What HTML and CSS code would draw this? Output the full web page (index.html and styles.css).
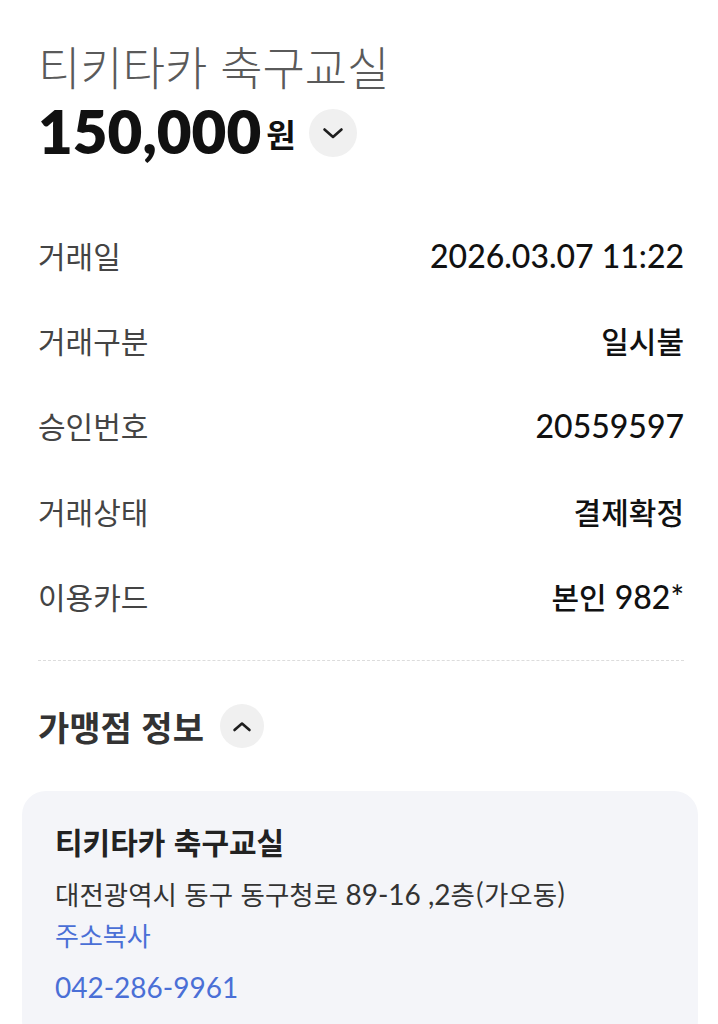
FILE: index.html
```html
<!DOCTYPE html>
<html lang="ko">
<head>
<meta charset="utf-8">
<title>거래 상세</title>
<link rel="stylesheet" href="styles.css">
</head>
<body>
<main class="page">
  <h1 class="merchant-title">티키타카 축구교실</h1>
  <div class="amount-row">
    <span class="amount">150,000</span><span class="won">원</span>
    <button class="circle-btn circle-lg" aria-label="펼치기">
      <svg width="22" height="12" viewBox="0 0 22 12"><path d="M2.5 2.5 L11 10 L19.5 2.5" fill="none" stroke="#1e1e1e" stroke-width="2.6" stroke-linecap="round" stroke-linejoin="round"/></svg>
    </button>
  </div>

  <dl class="details">
    <div class="row"><dt>거래일</dt><dd><span class="num">2026.03.07 11:22</span></dd></div>
    <div class="row"><dt>거래구분</dt><dd>일시불</dd></div>
    <div class="row"><dt>승인번호</dt><dd><span class="num">20559597</span></dd></div>
    <div class="row"><dt>거래상태</dt><dd>결제확정</dd></div>
    <div class="row"><dt>이용카드</dt><dd>본인<span class="num"> 982*</span></dd></div>
  </dl>

  <hr class="divider">

  <div class="section-head">
    <h2>가맹점 정보</h2>
    <button class="circle-btn circle-sm" aria-label="접기">
      <svg width="20" height="11" viewBox="0 0 20 11"><path d="M2.5 9 L10 2.5 L17.5 9" fill="none" stroke="#1e1e1e" stroke-width="2.6" stroke-linecap="round" stroke-linejoin="round"/></svg>
    </button>
  </div>

  <section class="card">
    <div class="card-title">티키타카 축구교실</div>
    <div class="card-addr">대전광역시 동구 동구청로 <span class="num-sm">89-16 ,2</span>층(가오동)</div>
    <div class="card-link">주소복사</div>
    <div class="card-phone">042-286-9961</div>
  </section>
</main>
</body>
</html>
```

FILE: styles.css
```css
* { box-sizing: border-box; }

html, body {
  margin: 0;
  padding: 0;
  background: #ffffff;
}

body {
  font-family: "Noto Sans CJK KR", "Noto Sans", sans-serif;
  color: #111;
}

.page {
  padding: 35px 34px 0 38px;
}

.merchant-title {
  margin: 0 0 4px 0;
  font-size: 46px;
  line-height: 60px;
  font-weight: 300;
  color: #5a5a5a;
}

.amount-row {
  display: flex;
  align-items: center;
  height: 64px;
}

.amount {
  font-family: Lato, "Noto Sans CJK KR", sans-serif;
  font-size: 60px;
  font-weight: 800;
  line-height: 64px;
  color: #111;
}

.won {
  font-size: 32px;
  font-weight: 700;
  color: #111;
  margin-left: 5px;
  margin-top: 4px;
}

.circle-btn {
  border: 0;
  padding: 0;
  background: #f0f0f0;
  border-radius: 50%;
  display: flex;
  align-items: center;
  justify-content: center;
}

.circle-lg {
  width: 48px;
  height: 48px;
  margin-left: 13px;
  margin-top: 4px;
}

.circle-sm {
  width: 44px;
  height: 44px;
  margin-left: 16px;
}

.details {
  margin: 49px 0 0 0;
  padding: 0;
}

.row {
  display: flex;
  justify-content: space-between;
  align-items: center;
  height: 85.3px;
}

.row dt {
  font-size: 30px;
  color: #444;
  font-weight: 400;
}

.row dd {
  margin: 0;
  font-size: 30px;
  font-weight: 500;
  color: #111;
}

.num {
  font-family: Lato, "Noto Sans CJK KR", sans-serif;
  font-size: 32px;
  font-weight: 500;
}

.divider {
  border: 0;
  border-top: 1.5px dashed #dcdcdc;
  margin: 22px 0 0 0;
}

.section-head {
  display: flex;
  align-items: center;
  height: 48px;
  margin-top: 41px;
}

.section-head h2 {
  margin: 0;
  font-size: 34px;
  font-weight: 700;
  color: #333;
}

.card {
  margin: 41px -14px 0 -16px;
  background: #f4f5f9;
  border-radius: 24px;
  padding: 31px 33px 40px 33px;
}

.card-title {
  font-size: 30px;
  line-height: 38px;
  font-weight: 700;
  color: #222;
}

.card-addr {
  margin-top: 16px;
  font-size: 26.5px;
  line-height: 36px;
  color: #333;
}

.num-sm {
  font-family: Lato, "Noto Sans CJK KR", sans-serif;
  font-size: 28px;
}

.card-link {
  margin-top: 5px;
  font-size: 26px;
  line-height: 36px;
  color: #4a6fd6;
}

.card-phone {
  margin-top: 16px;
  font-family: Lato, "Noto Sans CJK KR", sans-serif;
  font-size: 28px;
  line-height: 36px;
  color: #4a6fd6;
}
```
